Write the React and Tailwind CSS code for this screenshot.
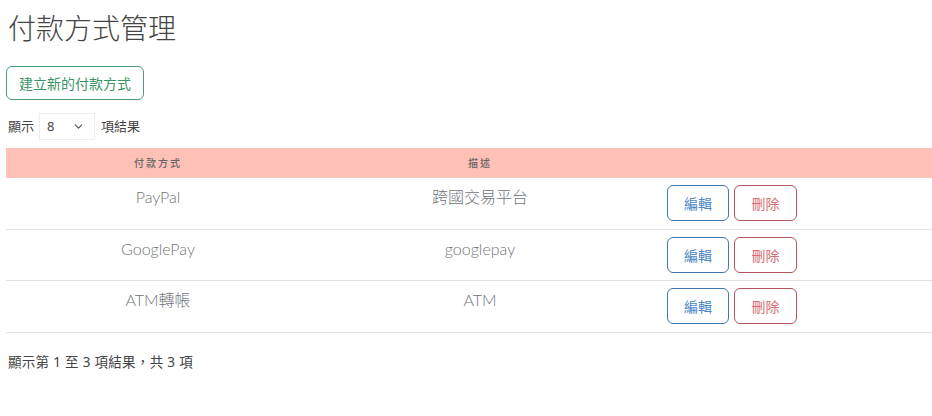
import { ChevronDown } from "lucide-react";

const methods = [
  { name: "PayPal", desc: "跨國交易平台" },
  { name: "GooglePay", desc: "googlepay" },
  { name: "ATM轉帳", desc: "ATM" },
];

const font = { fontFamily: '"Noto Sans", "Noto Sans CJK TC", sans-serif' };
const cellFont = { fontFamily: 'Lato, "Noto Sans CJK TC", sans-serif' };

export default function App() {
  return (
    <div className="min-h-[416px] bg-white pl-[6px] text-[#333]" style={font}>
      <h1 className="pl-[2px] pt-[8px] text-[28px] font-light leading-[40px] text-[#444]">付款方式管理</h1>

      <button className="mt-[18px] h-[34px] rounded-[6px] border border-[#4e9a74] px-[12px] text-[14px] text-[#3a9466]">
        建立新的付款方式
      </button>

      <div className="mt-[13px] flex items-center gap-[5px] pl-[2px] text-[13px] text-[#444]">
        <span>顯示</span>
        <div className="flex h-[27px] w-[56px] items-center justify-between border border-[#eee] bg-white pl-[7px] pr-[9px]">
          <span>8</span>
          <ChevronDown size={13} strokeWidth={2} className="text-[#555]" />
        </div>
        <span className="ml-[1px]">項結果</span>
      </div>

      <table className="mt-[8px] w-full border-collapse">
        <thead>
          <tr className="h-[30px] bg-[#ffc0b5] text-[10px] text-[#666]">
            <th className="w-[304px] font-medium tracking-[2px]">付款方式</th>
            <th className="w-[340px] font-medium tracking-[2px]">描述</th>
            <th></th>
          </tr>
        </thead>
        <tbody>
          {methods.map((m) => (
            <tr key={m.name} className="h-[51.4px] border-b border-[#e3e3e3] text-[16px] font-light text-[#6f747a]" style={cellFont}>
              <td className="pt-[7px] text-center align-top">{m.name}</td>
              <td className="pt-[7px] text-center align-top">{m.desc}</td>
              <td className="pl-[17px] align-middle">
                <div className="flex gap-[5px] font-normal" style={font}>
                  <button className="h-[36px] w-[62px] rounded-[6px] border border-[#3f78ad] text-[14px] text-[#4a86c4]">
                    編輯
                  </button>
                  <button className="h-[36px] w-[63px] rounded-[6px] border border-[#b5545e] text-[14px] text-[#d66b74]">
                    刪除
                  </button>
                </div>
              </td>
            </tr>
          ))}
        </tbody>
      </table>

      <p className="mt-[19px] pl-[2px] text-[13.5px] tracking-[0.3px] text-[#444]">顯示第 1 至 3 項結果，共 3 項</p>
    </div>
  );
}
